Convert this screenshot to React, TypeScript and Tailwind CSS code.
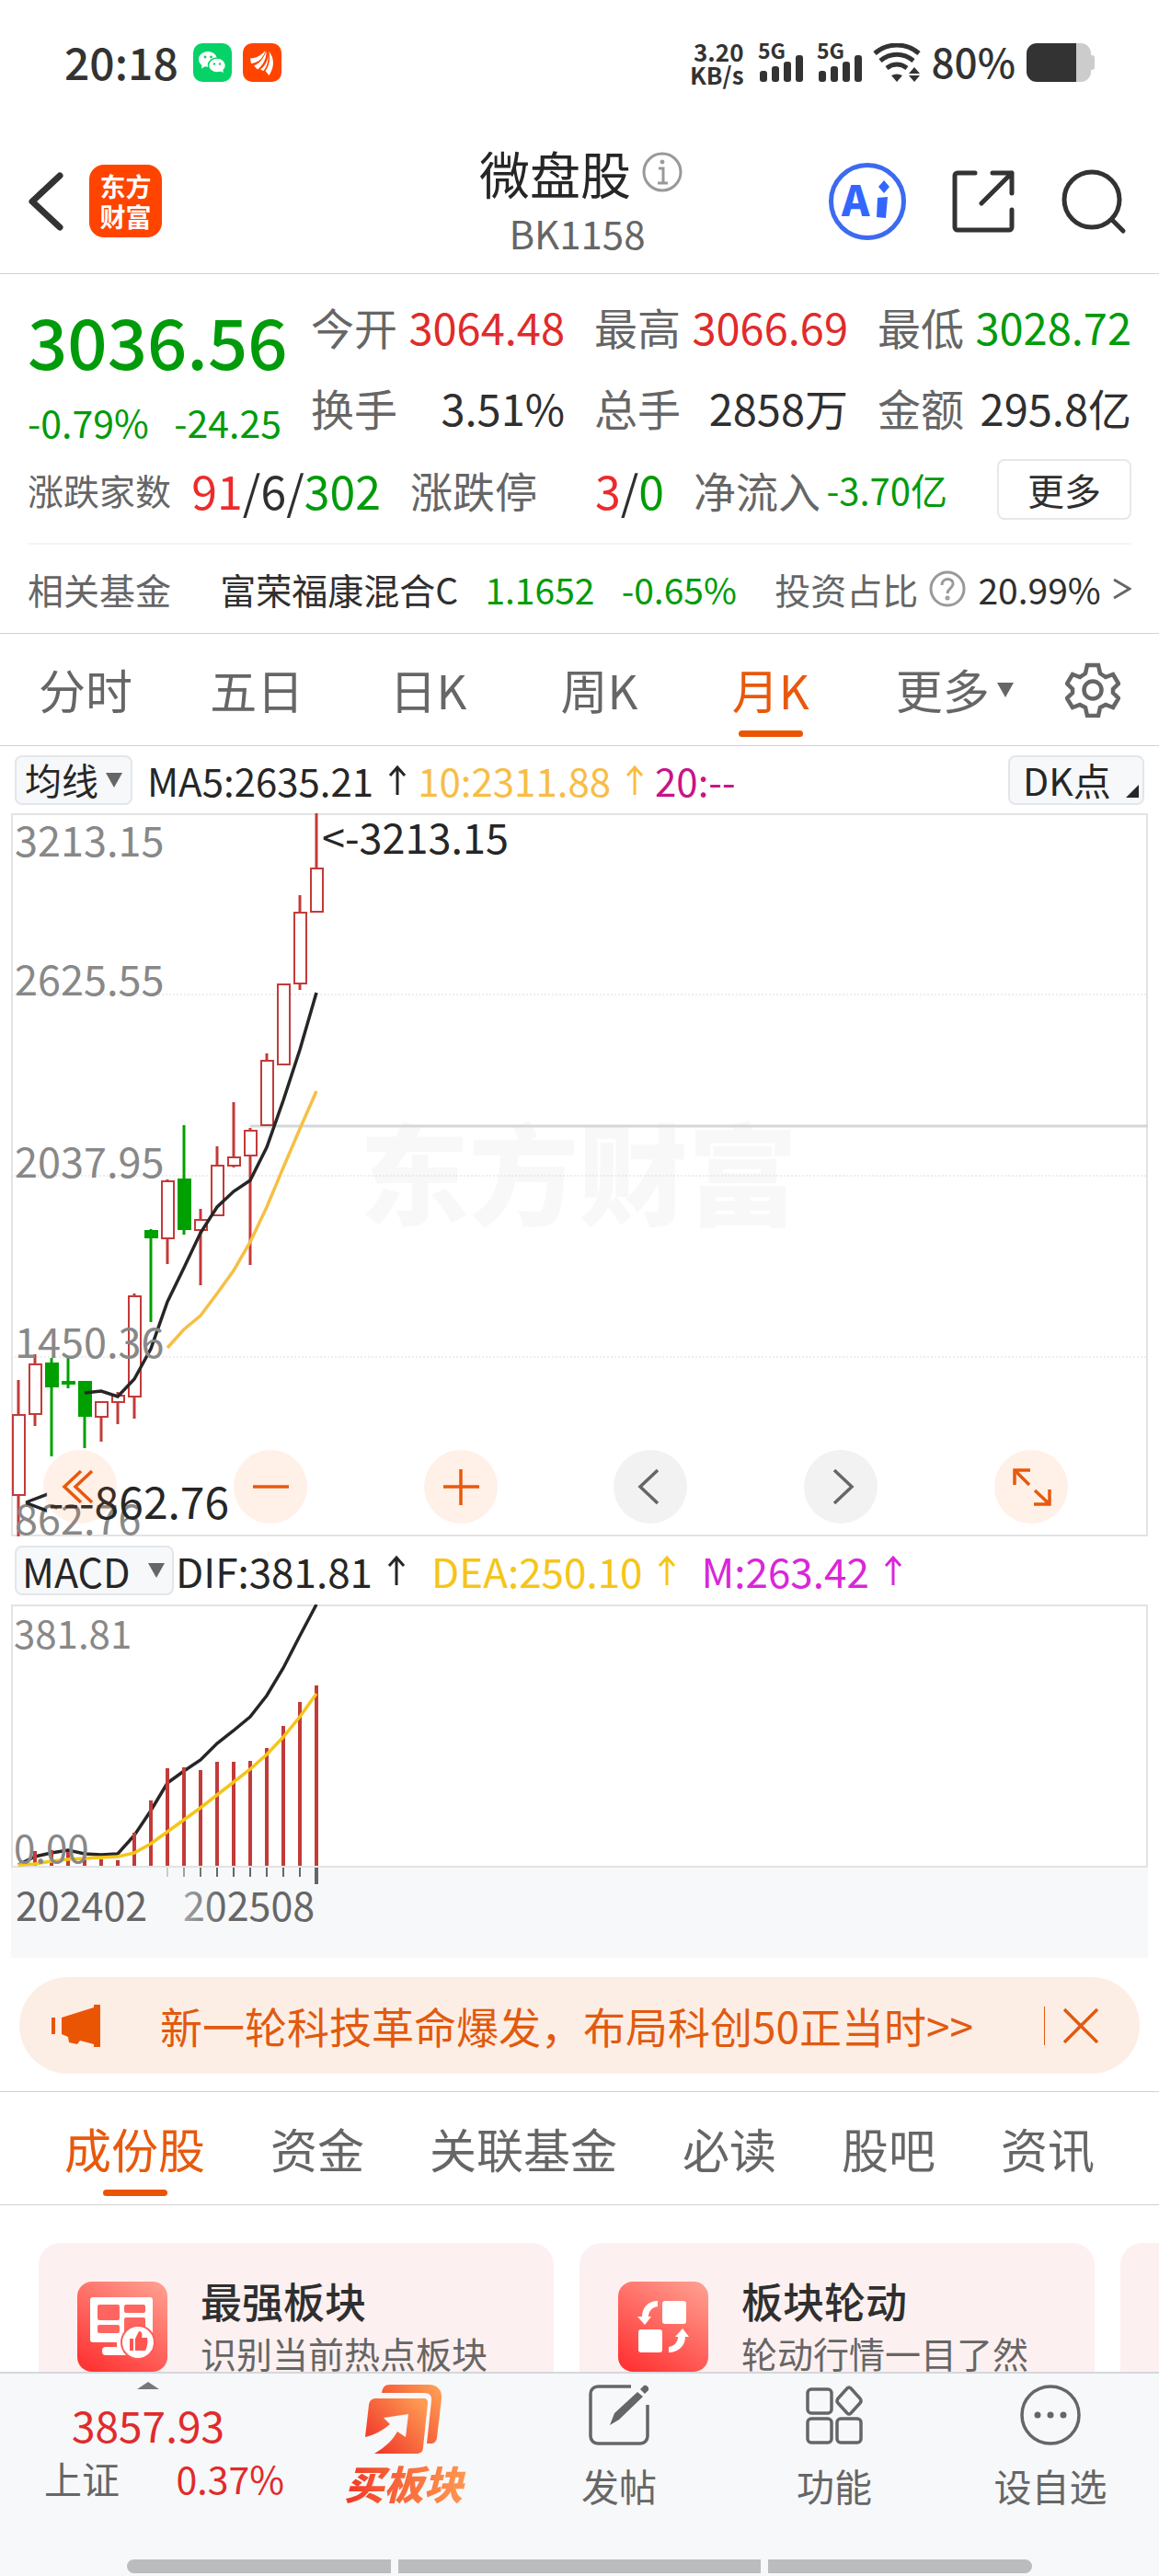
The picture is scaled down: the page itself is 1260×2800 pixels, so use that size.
import type { ReactNode } from 'react'

const RED = '#c23b39'
const GREEN = '#00a000'

// wick top, body top, body bottom, wick bottom
type Candle = [number, number, number, number, 'up' | 'down']

const candles: Candle[] = [
  [616, 654, 741, 786, 'up'],
  [588, 599, 653, 666, 'up'],
  [592, 598, 623, 699, 'down'],
  [592, 618, 620, 625, 'down'],
  [618, 618, 655, 690, 'down'],
  [640, 640, 656, 683, 'up'],
  [629, 633, 640, 664, 'up'],
  [522, 525, 634, 658, 'up'],
  [452, 454, 461, 553, 'down'],
  [398, 400, 462, 490, 'up'],
  [339, 398, 452, 458, 'down'],
  [430, 442, 453, 513, 'up'],
  [362, 383, 437, 438, 'up'],
  [314, 374, 383, 385, 'up'],
  [342, 345, 372, 491, 'up'],
  [261, 269, 339, 339, 'up'],
  [186, 186, 273, 273, 'up'],
  [89, 108, 185, 192, 'up'],
  [0, 60, 107, 107, 'up'],
]

const ma5 = [630, 628, 634, 615, 582, 531, 494, 456, 428, 411, 399, 363, 312, 257, 195]
const ma10 = [581, 561, 546, 522, 497, 466, 428, 385, 343, 302]
const macdBars = [268, 267, 269, 274, 277, 278, 248, 213, 178, 177, 180, 171, 171, 170, 156, 132, 106, 88]
const dif = [283, 274, 270, 267, 271, 272, 271, 251, 224, 194, 181, 169, 151, 137, 122, 99, 69, 34, 0]
const dea = [283, 282, 279, 277, 276, 275, 274, 270, 260, 247, 234, 221, 207, 193, 179, 163, 144, 122, 97]

const barX = (i: number) => 8 + i * 18

function points(values: number[], start = 0) {
  return values.map((y, i) => `${barX(i + start)},${y}`).join(' ')
}

const quotes = [
  { label: '今开', value: '3064.48', color: 'text-[#e02b2b]' },
  { label: '最高', value: '3066.69', color: 'text-[#e02b2b]' },
  { label: '最低', value: '3028.72', color: 'text-[#009b0a]' },
  { label: '换手', value: '3.51%', color: 'text-[#2f2f2f]' },
  { label: '总手', value: '2858万', color: 'text-[#2f2f2f]' },
  { label: '金额', value: '295.8亿', color: 'text-[#2f2f2f]' },
]

const periods = ['分时', '五日', '日K', '周K', '月K']
const sections = ['成份股', '资金', '关联基金', '必读', '股吧', '资讯']

export default function App() {
  return (
    <div className="flex min-h-screen flex-col overflow-x-hidden bg-white font-['Noto_Sans_CJK_SC',sans-serif] text-[#2f2f2f]">
      <StatusBar />
      <Header />
      <QuotePanel />
      <PeriodTabs />
      <KLineChart />
      <MacdChart />
      <Notice />
      <SectionTabs />
      <div className="flex grow basis-[140px] gap-7 overflow-hidden pt-[41px] pl-[42px]">
        <FeatureCard title="最强板块" text="识别当前热点板块" icon={<BoardIcon />} />
        <FeatureCard title="板块轮动" text="轮动行情一目了然" icon={<RotateIcon />} />
        <div className="h-[182px] w-[560px] shrink-0 rounded-3xl bg-[#fdf0f0]" />
      </div>
      <BottomBar />
    </div>
  )
}

function StatusBar() {
  return (
    <div className="flex h-[136px] items-center pr-[70px] pl-[70px] text-[#333]">
      <span className="pb-1 text-[48px] leading-[56px] font-medium">20:18</span>
      <svg className="ml-4 h-[42px] w-[42px]" viewBox="0 0 42 42">
        <rect width="42" height="42" rx="10" fill="#06d268" />
        <path d="M16 9C10.500 9 6 12.700 6 17.500c0 2.600 1.400 4.900 3.500 6.400L9 27.500l3.900-2.200c1 .3 2 .5 3.100.5C21.500 25.800 26 22.200 26 17.500S21.500 9 16 9Z" fill="#fff" />
        <ellipse cx="26" cy="24" rx="9.500" ry="8" fill="#fff" stroke="#06d268" strokeWidth="1.500" />
        <path d="m29 30 4 2-1-4Z" fill="#fff" />
        <circle cx="13" cy="15" r="1.400" fill="#06d268" />
        <circle cx="19.500" cy="15" r="1.400" fill="#06d268" />
        <circle cx="23" cy="22.500" r="1.200" fill="#06d268" />
        <circle cx="29" cy="22.500" r="1.200" fill="#06d268" />
      </svg>
      <svg className="ml-3 h-[42px] w-[42px]" viewBox="0 0 42 42">
        <rect width="42" height="42" rx="10" fill="#ff4400" />
        <path d="M8 16.500C15 16 20 13 24.500 8 23 15 17 21.500 9 22Z" fill="#fff" />
        <path d="M25.500 8.500C26 16 22 24 16 28.500L12 24.500c7-3 11-9 13.500-16Z" fill="#fff" />
        <path d="M27 8.500c1.500 7-1 15-8 20l3.500 1.500c5-6.500 6-14 4.500-21.500Z" fill="#fff" />
        <path d="M28.500 9c5.500 7 6.500 16 0 26l-4-5c4.500-6 5.500-13 4-21Z" fill="#fff" />
      </svg>

      <div className="ml-auto text-right text-[26px] leading-[25px] font-bold">
        <div>3.20</div>
        <div>KB/s</div>
      </div>
      <Signal />
      <Signal />
      <svg className="ml-3 h-[42px] w-[52px]" viewBox="0 0 52 42" fill="none" stroke="#333" strokeWidth="5">
        <path d="M2 11C16-1 36-1 50 11" />
        <path d="M8 19c11-9 25-9 36 0" />
        <path d="M15 27c7-5 15-5 22 0" />
        <path d="m20 35 6 7 6-7c-4-2-8-2-12 0ZM45 26l6 7H39ZM45 42l6-7H39Z" fill="#333" stroke="none" />
      </svg>
      <span className="ml-3 pb-1 text-[44px] leading-[50px] font-medium">80%</span>
      <svg className="ml-3 h-[42px] w-[74px]" viewBox="0 0 74 42">
        <path d="M54 0h5a11 11 0 0 1 11 11v2h1a3 3 0 0 1 3 3v10a3 3 0 0 1-3 3h-1v2a11 11 0 0 1-11 11h-5Z" fill="#ccc" />
        <path d="M54 0v42H11A11 11 0 0 1 0 31V11A11 11 0 0 1 11 0Z" fill="#333" />
      </svg>
    </div>
  )
}

function Signal() {
  return (
    <svg className="ml-4 h-[42px] w-12 overflow-visible" viewBox="0 0 48 42" fill="#333">
      <text x="-1" y="17" fontSize="23" fontWeight="700">5G</text>
      <rect x="1" y="30" width="8" height="12" rx="3" />
      <rect x="14" y="25" width="8" height="17" rx="3" />
      <rect x="27" y="20" width="8" height="22" rx="3" />
      <rect x="40" y="13" width="8" height="29" rx="3" />
    </svg>
  )
}

function Header() {
  return (
    <header className="grid h-[162px] grid-cols-[1fr_auto_1fr] items-center border-b border-[#d2d2d2] pt-1 pr-[35px] pl-[30px]">
      <div className="flex items-center gap-[27px]">
        <button type="button" aria-label="返回">
          <svg className="h-16 w-10" viewBox="0 0 40 64" fill="none" stroke="#333" strokeWidth="7" strokeLinecap="round" strokeLinejoin="round">
            <path d="M35 4 5 32l30 28" />
          </svg>
        </button>
        <div className="flex h-[79px] w-[79px] flex-col items-center justify-center rounded-2xl bg-[#ff4400] text-[28px] leading-[33px] font-bold text-white">
          <span>东方</span>
          <span>财富</span>
        </div>
      </div>

      <div className="flex flex-col items-center pt-1">
        <div className="flex items-center gap-3 pl-2">
          <h1 className="text-[55px] leading-[64px] text-[#262626]">微盘股</h1>
          <button type="button" aria-label="说明">
            <svg className="h-11 w-11" viewBox="0 0 44 44" fill="none" stroke="#999" strokeWidth="3">
              <circle cx="22" cy="22" r="20" />
              <path d="M18 18h5v16M17 34h11" />
              <circle cx="22" cy="11" r="2" fill="#999" strokeWidth="1" />
            </svg>
          </button>
        </div>
        <span className="text-[42px] leading-[68px] text-[#666]">BK1158</span>
      </div>

      <div className="flex items-center justify-end gap-[50px]">
        <button type="button" aria-label="Ai" className="flex h-[84px] w-[84px] items-center justify-center rounded-full border-5 border-[#3c6af0] text-[#3366ff]">
          <svg className="h-[74px] w-[74px]" viewBox="0 0 74 74" fill="#3366ff">
            <text x="9" y="53" fontSize="46" fontWeight="900">A</text>
            <path d="m48 33 11-1-2 23-10-1ZM55 14l6 7-6 7-6-7Z" />
          </svg>
        </button>
        <button type="button" aria-label="分享">
          <svg className="h-[68px] w-[68px]" viewBox="0 0 68 68" fill="none" stroke="#333" strokeWidth="5" strokeLinecap="round" strokeLinejoin="round">
            <path d="M25 3H6a3 3 0 0 0-3 3v56a3 3 0 0 0 3 3h56a3 3 0 0 0 3-3V43M44 3h21v22M65 3 32 36" />
          </svg>
        </button>
        <button type="button" aria-label="搜索">
          <svg className="h-[72px] w-[72px]" viewBox="0 0 72 72" fill="none" stroke="#333" strokeWidth="5" strokeLinecap="round">
            <circle cx="34" cy="34" r="30" />
            <path d="m56 56 12 12" />
          </svg>
        </button>
      </div>
    </header>
  )
}

function QuotePanel() {
  return (
    <section className="flex flex-col border-b border-[#d2d2d2] px-[30px]">
      <div className="grid grid-cols-4 gap-x-8 pt-[13px]">
        <div className="row-span-2 flex flex-col justify-between pt-2 text-[#009b0a]">
          <strong className="text-[76px] leading-[100px] font-medium">3036.56</strong>
          <div className="flex justify-between pb-1 text-[41px] leading-[50px]">
            <span>-0.79%</span>
            <span>-24.25</span>
          </div>
        </div>
        {quotes.map((q) => (
          <div key={q.label} className="flex h-[88px] items-center justify-between whitespace-nowrap">
            <span className="text-[47px] text-[#666]">{q.label}</span>
            <span className={`text-[47px] ${q.color}`}>{q.value}</span>
          </div>
        ))}
      </div>

      <div className="flex h-[90px] items-center gap-8 whitespace-nowrap">
        <div className="flex w-[384px] items-center justify-between">
          <span className="text-[39px] text-[#666]">涨跌家数</span>
          <span className="text-[50px] leading-[70px]">
            <span className="text-[#ee2a2a]">91</span>/6/<span className="text-[#009b0a]">302</span>
          </span>
        </div>
        <div className="flex w-[276px] items-center justify-between">
          <span className="text-[46px] text-[#666]">涨跌停</span>
          <span className="text-[50px] leading-[70px]">
            <span className="text-[#ee2a2a]">3</span>/<span className="text-[#009b0a]">0</span>
          </span>
        </div>
        <div className="flex w-[276px] items-center justify-between">
          <span className="text-[46px] text-[#666]">净流入</span>
          <span className="text-[40px] text-[#009b0a]">-3.70亿</span>
        </div>
        <button type="button" className="ml-auto h-[66px] w-[146px] rounded-lg border-2 border-[#e6e8ea] text-[40px] leading-none">
          更多
        </button>
      </div>

      <a href="#fund" className="mt-[13px] flex h-[98px] items-center justify-between border-t-2 border-[#f5f5f5] text-[39px] whitespace-nowrap">
        <span className="text-[#666]">相关基金</span>
        <span className="ml-6">富荣福康混合C</span>
        <span className="text-[#009b0a]">1.1652</span>
        <span className="text-[#009b0a]">-0.65%</span>
        <span className="ml-3 flex items-center gap-3 text-[#666]">
          投资占比
          <svg className="h-10 w-10" viewBox="0 0 40 40" fill="none" stroke="#999" strokeWidth="3">
            <circle cx="20" cy="20" r="18" />
            <path d="M14 16c0-9 13-8 12-1-1 5-6 5-6 10" />
            <circle cx="20" cy="30" r="1" />
          </svg>
        </span>
        <span className="-ml-4">20.99%</span>
        <svg className="-ml-4 h-6 w-5" viewBox="0 0 20 24" fill="none" stroke="#666" strokeWidth="3">
          <path d="m1 2 17 10L1 22" />
        </svg>
      </a>
    </section>
  )
}

function PeriodTabs() {
  return (
    <nav className="grid h-[122px] grid-cols-[repeat(5,186fr)_214fr_86fr] border-b border-[#d2d2d2] pr-[29px] text-[51px] text-[#666]">
      {periods.map((p) => (
        <button
          key={p}
          type="button"
          className={
            p === '月K'
              ? 'relative text-[#e8590c] after:absolute after:bottom-[9px] after:left-1/2 after:h-[7px] after:w-[70px] after:-translate-x-1/2 after:rounded-full after:bg-[#ea5504]'
              : ''
          }
        >
          {p}
        </button>
      ))}
      <button type="button" className="flex items-center justify-center gap-2">
        更多
        <Triangle className="h-4 w-[18px]" />
      </button>
      <button type="button" aria-label="设置" className="flex items-center justify-center">
        <svg className="h-[60px] w-[60px]" viewBox="0 0 60 60" fill="none" stroke="#666" strokeWidth="4.500">
          <path d="M24 3h12l2 9 6 4 8-3 6 10-6 6v4l6 6-6 10-8-3-6 3-2 9H24l-2-9-6-3-8 3-6-10 6-6v-4l-6-6 6-10 8 3 6-4Z" />
          <circle cx="30" cy="30" r="9.500" />
        </svg>
      </button>
    </nav>
  )
}

function Triangle({ className }: { className: string }) {
  return (
    <svg className={className} viewBox="0 0 18 16" fill="#666">
      <path d="M0 0h18L9 16Z" />
    </svg>
  )
}

function KLineChart() {
  return (
    <section className="px-3">
      <div className="flex h-[73px] items-center px-1 text-[42px] leading-[51px] whitespace-nowrap text-[#262626]">
        <button type="button" className="flex h-[54px] w-32 items-center justify-center gap-2 rounded-lg border-2 border-[#e3e6ea] bg-[#f6f8fa] text-[40px]">
          均线
          <Triangle className="h-4 w-[18px]" />
        </button>
        <span className="ml-4">MA5:2635.21</span>
        <UpArrow />
        <span className="ml-3 text-[#f8bd45]">10:2311.88</span>
        <UpArrow className="text-[#f8bd45]" />
        <span className="ml-3 text-[#c8138a]">20:--</span>
        <button type="button" className="ml-auto flex h-[54px] w-[148px] items-center justify-between rounded-lg border-2 border-[#e3e6ea] bg-[#f6f8fa] pr-1 pl-[14px] text-[41px]">
          DK点
          <svg className="mt-6 h-[14px] w-[14px]" viewBox="0 0 14 14" fill="#262626">
            <path d="M14 0v14H0Z" />
          </svg>
        </button>
      </div>

      <div className="relative">
        <svg className="block w-full overflow-visible" viewBox="0 0 1236 786">
          <text x="379" y="439" fontSize="119" fontWeight="900" fill="#f8f8f8">东方财富</text>
          <rect x="1" y="1" width="1234" height="784" fill="none" stroke="#e3e3e3" strokeWidth="2" />
          {[197, 394, 591].map((y) => (
            <line key={y} x1="0" x2="1236" y1={y} y2={y} stroke="#dcdcdc" strokeDasharray="2 2" />
          ))}
          <line x1="260" x2="1236" y1="340" y2="340" stroke="#d3d7da" strokeWidth="3" />
          {candles.map(([high, top, bottom, low, dir], i) => {
            const x = barX(i)
            const color = dir === 'up' ? RED : GREEN
            return (
              <g key={i} stroke={color} strokeWidth="3">
                <line x1={x} x2={x} y1={high} y2={top} />
                <line x1={x} x2={x} y1={bottom} y2={low} />
                <rect x={x - 6} y={top} width="13" height={bottom - top} fill={dir === 'up' ? '#fff' : color} strokeWidth="2" />
              </g>
            )
          })}
          <polyline points={points(ma5, 4)} fill="none" stroke="#262626" strokeWidth="3.500" />
          <polyline points={points(ma10, 9)} fill="none" stroke="#f6bf45" strokeWidth="3.500" />
          <g fontSize="45" fill="#888">
            <text x="4" y="47">3213.15</text>
            <text x="4" y="198">2625.55</text>
            <text x="4" y="396">2037.95</text>
            <text x="4" y="592">1450.36</text>
            <text x="4" y="784">862.76</text>
          </g>
          <g fill="#262626">
            <text x="338" y="44" fontSize="45">&lt;-3213.15</text>
            <text x="14" y="767" fontSize="48">&lt;---862.76</text>
          </g>
        </svg>
        <div className="absolute inset-x-0 bottom-[14px] flex justify-between pr-[87px] pl-[35px]">
          <ChartButton label="最早">
            <path d="M41 23 23 40l18 17M53 23 35 40l18 17" />
          </ChartButton>
          <ChartButton label="缩小">
            <path d="M21 40h39" />
          </ChartButton>
          <ChartButton label="放大">
            <path d="M21 40h39M40 21v39" />
          </ChartButton>
          <ChartButton label="左移" gray>
            <path d="M48 22 29 40l19 18" />
          </ChartButton>
          <ChartButton label="右移" gray>
            <path d="m33 22 19 18-19 18" />
          </ChartButton>
          <ChartButton label="全屏">
            <path d="M22 38V22h17M22 22l16 16M43 59h17V43M60 59 44 44" />
          </ChartButton>
        </div>
      </div>
    </section>
  )
}

function UpArrow({ className = '' }: { className?: string }) {
  return (
    <svg className={`ml-4 h-8 w-5 ${className}`} viewBox="0 0 20 32" fill="none" stroke="currentColor" strokeWidth="3">
      <path d="M10 32V2M2 11l8-9 8 9" />
    </svg>
  )
}

interface ChartButtonProps {
  label: string
  gray?: boolean
  children: ReactNode
}

function ChartButton({ label, gray, children }: ChartButtonProps) {
  return (
    <button
      type="button"
      aria-label={label}
      className={`h-20 w-20 rounded-full ${gray ? 'bg-[#f2f2f2] text-[#666]' : 'bg-[#ff6a1a]/10 text-[#e8590c]'}`}
    >
      <svg viewBox="0 0 80 80" fill="none" stroke="currentColor" strokeWidth="3.500">
        {children}
      </svg>
    </button>
  )
}

function MacdChart() {
  return (
    <section className="px-3">
      <div className="flex h-[74px] items-center px-1 text-[44px] leading-[51px] whitespace-nowrap text-[#262626]">
        <button type="button" className="flex h-[54px] w-[173px] items-center justify-between rounded-lg border-2 border-[#e3e6ea] bg-[#f6f8fa] pr-2 pl-[6px] text-[43px]">
          MACD
          <Triangle className="h-4 w-[18px]" />
        </button>
        <span className="ml-[2px]">DIF:381.81</span>
        <UpArrow />
        <span className="ml-7 text-[#f5c518]">DEA:250.10</span>
        <UpArrow className="text-[#f5c518]" />
        <span className="ml-7 text-[#d926d9]">M:263.42</span>
        <UpArrow className="text-[#d926d9]" />
      </div>
      <svg className="block w-full" viewBox="0 0 1236 286">
        <rect x="1" y="1" width="1234" height="284" fill="none" stroke="#e3e3e3" strokeWidth="2" />
        <polyline points={points(dif)} fill="none" stroke="#262626" strokeWidth="3.500" />
        {macdBars.map((y, i) => (
          <line key={i} x1={barX(i + 1)} x2={barX(i + 1)} y1={y} y2="284" stroke={RED} strokeWidth="4" />
        ))}
        <polyline points={points(dea)} fill="none" stroke="#f5c518" strokeWidth="3.500" />
        <g fontSize="42" fill="#888">
          <text x="3" y="48">381.81</text>
          <text x="3" y="281">0.00</text>
        </g>
      </svg>
      <svg className="block w-full bg-[#f7f8fa]" viewBox="0 0 1236 98">
        <defs>
          <linearGradient id="axis-fade" gradientUnits="userSpaceOnUse" x1="160" x2="230" y1="0" y2="0">
            <stop offset="0" stopColor="#666" stopOpacity="0.300" />
            <stop offset="1" stopColor="#666" />
          </linearGradient>
        </defs>
        {candles.slice(9).map((_, i) => (
          <line key={i} x1={barX(i + 9)} x2={barX(i + 9)} y1="0" y2={i === 9 ? 18 : 10} stroke="#666" strokeWidth={i === 9 ? 4 : 2} strokeOpacity={Math.min(1, 0.3 + i * 0.3)} />
        ))}
        <text x="5" y="58" fontSize="43" fill="#666">202402</text>
        <text x="187" y="58" fontSize="43" fill="url(#axis-fade)">202508</text>
      </svg>
    </section>
  )
}

function Notice() {
  return (
    <div className="mx-[21px] mt-[21px] mb-[19px] flex h-[105px] items-center rounded-full bg-[#fdeee5] pr-[45px] pl-[35px] text-[#e15a0f]">
      <svg className="h-[46px] w-[54px]" viewBox="0 0 54 46" fill="#ea5504">
        <path d="M0 14h4v18H0ZM11 14 46 3V0h7v46h-7v-3l-15-4-3 4-9-2-1-6-7-3Z" />
      </svg>
      <a href="#notice" className="ml-16 text-[46px] whitespace-nowrap">
        新一轮科技革命爆发，布局科创50正当时&gt;&gt;
      </a>
      <span className="ml-auto h-[42px] w-px bg-[#e15a0f]" />
      <button type="button" aria-label="关闭" className="ml-5">
        <svg className="h-[38px] w-[38px]" viewBox="0 0 38 38" fill="none" stroke="currentColor" strokeWidth="3.500">
          <path d="m1 1 36 36M37 1 1 37" />
        </svg>
      </button>
    </div>
  )
}

function SectionTabs() {
  return (
    <nav className="flex h-[124px] justify-between border-y border-[#d2d2d2] px-[70px] text-[51px] whitespace-nowrap text-[#666]">
      {sections.map((s, i) => (
        <button
          key={s}
          type="button"
          className={
            i === 0
              ? 'relative text-[#e8590c] after:absolute after:bottom-[9px] after:left-1/2 after:h-[7px] after:w-[70px] after:-translate-x-1/2 after:rounded-full after:bg-[#ea5504]'
              : ''
          }
        >
          {s}
        </button>
      ))}
    </nav>
  )
}

interface FeatureCardProps {
  title: string
  text: string
  icon: ReactNode
}

function FeatureCard({ title, text, icon }: FeatureCardProps) {
  return (
    <a href="#feature" className="flex h-[182px] w-[560px] shrink-0 items-center gap-9 rounded-3xl bg-[#fdf0f0] pl-[42px] whitespace-nowrap">
      {icon}
      <span className="flex flex-col">
        <span className="text-[45px] leading-[56px] font-medium">{title}</span>
        <span className="text-[39px] leading-[56px] text-[#666]">{text}</span>
      </span>
    </a>
  )
}

function CardGradient({ id }: { id: string }) {
  return (
    <>
      <defs>
        <linearGradient id={id} x1="0.200" y1="1" x2="0.800" y2="0">
          <stop offset="0" stopColor="#ff3434" />
          <stop offset="1" stopColor="#ff9a8c" />
        </linearGradient>
      </defs>
      <rect width="98" height="98" rx="16" fill={`url(#${id})`} />
    </>
  )
}

function BoardIcon() {
  return (
    <svg className="h-[98px] w-[98px]" viewBox="0 0 98 98" fill="#fff">
      <CardGradient id="card-a" />
      <rect x="14" y="17" width="68" height="49" rx="3" />
      <rect x="27" y="71" width="34" height="9" rx="4" />
      <rect x="43" y="62" width="10" height="12" />
      <g fill="#ff6560">
        <rect x="22" y="25" width="24" height="17" rx="2" />
        <rect x="51" y="25" width="23" height="9" rx="2" />
        <rect x="22" y="47" width="24" height="9" rx="2" />
        <rect x="51" y="39" width="23" height="17" rx="2" />
      </g>
      <circle cx="66" cy="66" r="18" stroke="#ff5c57" strokeWidth="2" />
      <path d="M57 62h4v13h-4ZM63 62l4-8c3 0 4 2 3 7h6c1 5 0 10-2 14H63Z" fill="#ff5650" />
    </svg>
  )
}

function RotateIcon() {
  return (
    <svg className="h-[98px] w-[98px]" viewBox="0 0 98 98" fill="#fff">
      <CardGradient id="card-b" />
      <rect x="48" y="21" width="26" height="25" rx="3" />
      <rect x="22" y="52" width="26" height="25" rx="3" />
      <path d="M43 21v6c-6 1-10 5-10 11h3l-7 9-8-9h5c0-10 7-17 17-17ZM55 77v-6c6-1 10-5 10-11h-3l8-9 7 9h-4c0 10-8 17-18 17Z" />
    </svg>
  )
}

function BottomBar() {
  return (
    <footer className="flex h-[222px] shrink-0 flex-col border-t-2 border-[#d5d8dc] bg-[#f6f8fa]">
      <div className="grid grid-cols-[322fr_234fr_234fr_234fr_236fr] text-[41px] text-[#666]">
        <button type="button" className="flex flex-col items-center pt-[9px]">
          <svg className="h-2 w-6" viewBox="0 0 24 8" fill="#777">
            <path d="m12 0 12 8H0Z" />
          </svg>
          <span className="mt-2 text-[46px] leading-[60px] text-[#e02b2b]">3857.93</span>
          <span className="flex w-[322px] justify-between pr-[13px] pl-12 leading-[56px]">
            上证 <span className="text-[#e02b2b]">0.37%</span>
          </span>
        </button>
        <button type="button" className="flex flex-col items-center pt-3">
          <svg className="h-[76px] w-[84px]" viewBox="0 0 84 76">
            <defs>
              <linearGradient id="buy" x1="0" y1="1" x2="1" y2="0.200">
                <stop offset="0" stopColor="#ee2a24" />
                <stop offset="1" stopColor="#ff9a52" />
              </linearGradient>
            </defs>
            <path d="M18 9c1-6 3-9 9-9h42c9 0 15 6 14 15l-5 43c-1 4-3 6-7 6h-4l5-46c1-6-2-9-8-9Z" fill="url(#buy)" />
            <path d="M12 15h51c4 0 5 2 5 5l-5 48c0 5-3 7-7 7H10c13-8 20-15 25-24l9 6 3-25-27 4 7 7C20 49 10 55 0 57l4-35c1-5 3-7 8-7Z" fill="url(#buy)" />
          </svg>
          <span className="bg-linear-to-r from-[#ee2a24] to-[#ff9a52] bg-clip-text px-2 text-[43px] leading-[60px] font-black text-transparent italic">
            买板块
          </span>
        </button>
        <NavItem label="发帖">
          <path d="M47 3H11a8 8 0 0 0-8 8v46a8 8 0 0 0 8 8h46a8 8 0 0 0 8-8V23" />
          <path d="m24 45 5-13 25-23 6 5-26 25ZM57 6l4-4c3-1 6 2 5 5l-4 4Z" fill="#666" stroke="none" />
        </NavItem>
        <NavItem label="功能">
          <rect x="5" y="6" width="26" height="26" rx="4" />
          <rect x="5" y="38" width="26" height="26" rx="4" />
          <rect x="37" y="38" width="26" height="26" rx="4" />
          <path d="m48 5-10 11q-2 3 0 5l10 11q2 2 4 0l10-11q2-2 0-5L52 5q-2-2-4 0Z" />
        </NavItem>
        <NavItem label="设自选">
          <circle cx="34" cy="34" r="31" />
          <g fill="#666" stroke="none">
            <circle cx="20" cy="34" r="3.500" />
            <circle cx="34" cy="34" r="3.500" />
            <circle cx="48" cy="34" r="3.500" />
          </g>
        </NavItem>
      </div>
      <div className="mt-auto mb-[3px] flex h-[15px] gap-2 px-[138px]">
        <span className="grow-[287] basis-0 rounded-l-full bg-[#bbbcbe]" />
        <span className="grow-[394] basis-0 bg-[#bbbcbe]" />
        <span className="grow-[287] basis-0 rounded-r-full bg-[#bbbcbe]" />
      </div>
    </footer>
  )
}

function NavItem({ label, children }: { label: string; children: ReactNode }) {
  return (
    <button type="button" className="flex flex-col items-center pt-[11px]">
      <svg className="h-[68px] w-[68px]" viewBox="0 0 68 68" fill="none" stroke="#666" strokeWidth="3.500">
        {children}
      </svg>
      <span className="mt-3 leading-[60px]">{label}</span>
    </button>
  )
}
